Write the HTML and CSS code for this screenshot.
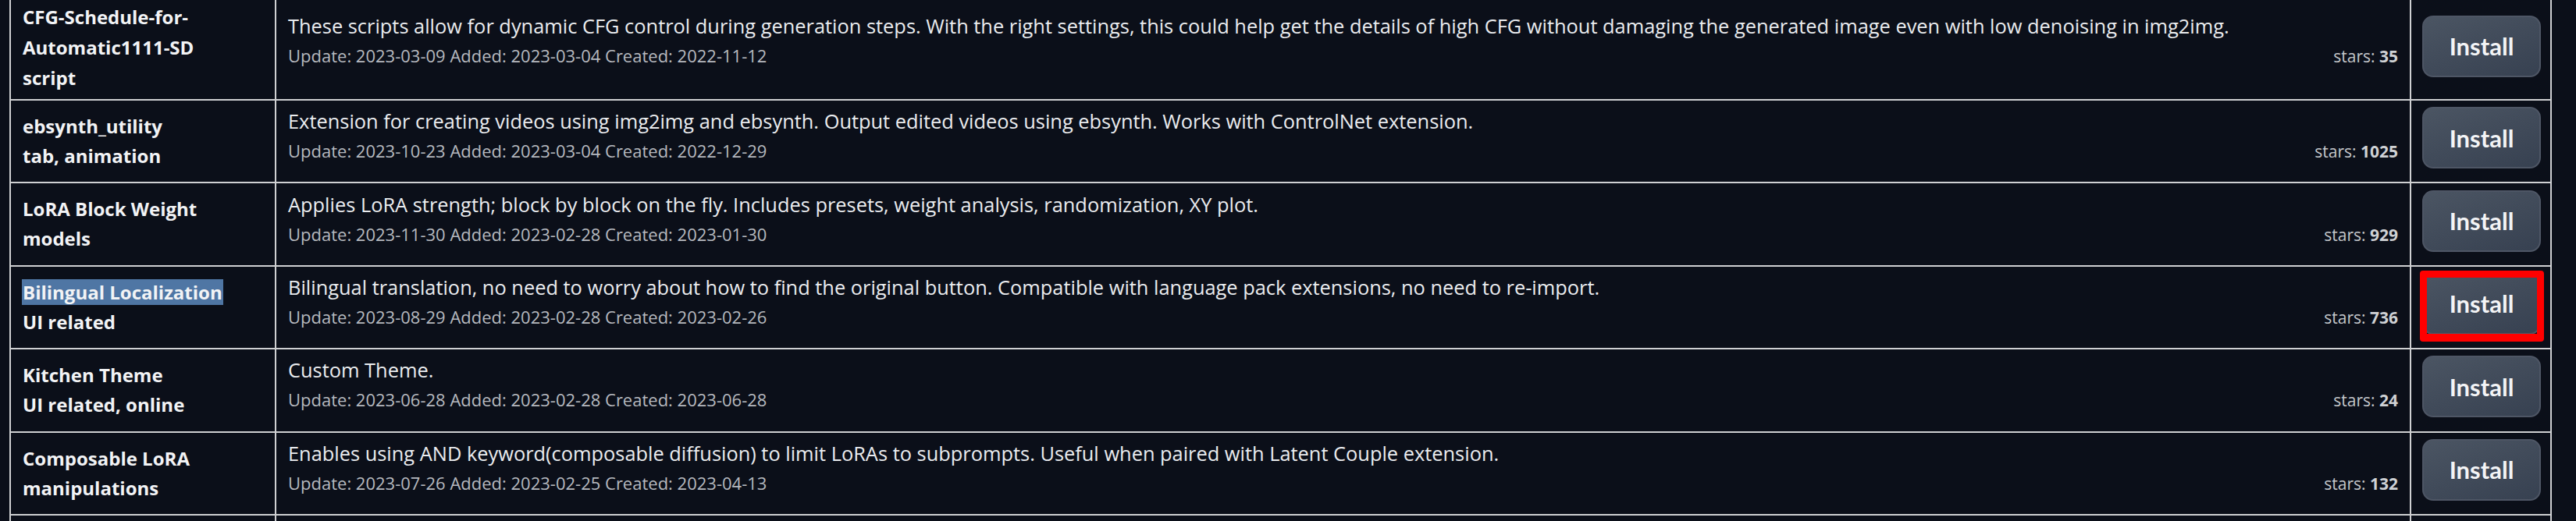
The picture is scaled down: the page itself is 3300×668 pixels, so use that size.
FILE: index.html
```html
<!DOCTYPE html>
<html lang="en">
<head>
<meta charset="utf-8">
<title>Available extensions</title>
<link rel="stylesheet" href="styles.css">
</head>
<body>
<div class="viewport">
  <div class="panel">
    <table class="ext-table">
      <tbody>
        <tr class="row-first">
          <td class="name-cell"><span class="ext-name">CFG-Schedule-for-<br>Automatic1111-SD</span><br><span class="ext-tags">script</span></td>
          <td class="desc-cell">
            <div class="desc">These scripts allow for dynamic CFG control during generation steps. With the right settings, this could help get the details of high CFG without damaging the generated image even with low denoising in img2img.</div>
            <div class="info"><span class="dates">Update: 2023-03-09 Added: 2023-03-04 Created: 2022-11-12</span><span class="stars">stars: <b>35</b></span></div>
          </td>
          <td class="btn-cell"><div class="btn-wrap"><button class="install">Install</button></div></td>
        </tr>
        <tr>
          <td class="name-cell"><span class="ext-name">ebsynth_utility</span><br><span class="ext-tags">tab, animation</span></td>
          <td class="desc-cell">
            <div class="desc">Extension for creating videos using img2img and ebsynth. Output edited videos using ebsynth. Works with ControlNet extension.</div>
            <div class="info"><span class="dates">Update: 2023-10-23 Added: 2023-03-04 Created: 2022-12-29</span><span class="stars">stars: <b>1025</b></span></div>
          </td>
          <td class="btn-cell"><div class="btn-wrap"><button class="install">Install</button></div></td>
        </tr>
        <tr>
          <td class="name-cell"><span class="ext-name">LoRA Block Weight</span><br><span class="ext-tags">models</span></td>
          <td class="desc-cell">
            <div class="desc">Applies LoRA strength; block by block on the fly. Includes presets, weight analysis, randomization, XY plot.</div>
            <div class="info"><span class="dates">Update: 2023-11-30 Added: 2023-02-28 Created: 2023-01-30</span><span class="stars">stars: <b>929</b></span></div>
          </td>
          <td class="btn-cell"><div class="btn-wrap"><button class="install">Install</button></div></td>
        </tr>
        <tr>
          <td class="name-cell"><span class="ext-name selected">Bilingual Localization</span><br><span class="ext-tags">UI related</span></td>
          <td class="desc-cell">
            <div class="desc">Bilingual translation, no need to worry about how to find the original button. Compatible with language pack extensions, no need to re-import.</div>
            <div class="info"><span class="dates">Update: 2023-08-29 Added: 2023-02-28 Created: 2023-02-26</span><span class="stars">stars: <b>736</b></span></div>
          </td>
          <td class="btn-cell"><div class="btn-wrap"><button class="install">Install</button><span class="highlight-box"></span></div></td>
        </tr>
        <tr>
          <td class="name-cell"><span class="ext-name">Kitchen Theme</span><br><span class="ext-tags">UI related, online</span></td>
          <td class="desc-cell">
            <div class="desc">Custom Theme.</div>
            <div class="info"><span class="dates">Update: 2023-06-28 Added: 2023-02-28 Created: 2023-06-28</span><span class="stars">stars: <b>24</b></span></div>
          </td>
          <td class="btn-cell"><div class="btn-wrap"><button class="install">Install</button></div></td>
        </tr>
        <tr>
          <td class="name-cell"><span class="ext-name">Composable LoRA</span><br><span class="ext-tags">manipulations</span></td>
          <td class="desc-cell">
            <div class="desc">Enables using AND keyword(composable diffusion) to limit LoRAs to subprompts. Useful when paired with Latent Couple extension.</div>
            <div class="info"><span class="dates">Update: 2023-07-26 Added: 2023-02-25 Created: 2023-04-13</span><span class="stars">stars: <b>132</b></span></div>
          </td>
          <td class="btn-cell"><div class="btn-wrap"><button class="install">Install</button></div></td>
        </tr>
        <tr class="row-cut">
          <td class="name-cell"></td>
          <td class="desc-cell"></td>
          <td class="btn-cell"></td>
        </tr>
      </tbody>
    </table>
  </div>
</div>
</body>
</html>
```
FILE: styles.css
```css
html, body {
  margin: 0;
  padding: 0;
  background: #0b0f19;
}

body {
  font-family: "Open Sans", "Liberation Sans", sans-serif;
  color: #e8e9eb;
}

.viewport {
  height: 668px;
  overflow: hidden;
}

.panel {
  padding: 0 31px 0 12px;
}

.ext-table {
  width: 100%;
  margin-top: -12px;
  border-collapse: collapse;
  table-layout: fixed;
}

.ext-table td {
  border: 2px solid #cfd0d2;
  padding: 14px 15px 14.4px 15px;
}

.name-cell {
  width: 308px;
  vertical-align: middle;
  font-weight: 700;
  font-size: 24px;
  line-height: 38px;
  color: #f2f3f5;
  padding-left: 16px;
}

.row-first .name-cell {
  line-height: 39px;
  padding-top: 12px;
  padding-bottom: 8px;
}

.ext-name.selected {
  background: #4f76a4;
  padding: 0 1px;
  margin-left: -1px;
}

.ext-table .desc-cell {
  vertical-align: middle;
  padding-top: 0;
  padding-bottom: 0;
}

.desc {
  font-size: 25.4px;
  line-height: 36px;
  color: #eaecef;
}

.info {
  display: flex;
  align-items: baseline;
  justify-content: space-between;
  margin-top: 6px;
  margin-bottom: 17px;
  line-height: 28px;
}

.dates {
  font-size: 22px;
  color: #b6b9bf;
}

.stars {
  font-size: 21px;
  color: #c4c6ca;
}

.stars b {
  font-weight: 700;
  color: #cfd1d4;
}

.ext-table .btn-cell {
  width: 150px;
  vertical-align: middle;
  padding: 8px 14px 17px 14px;
}

.ext-table .row-first .btn-cell {
  padding-top: 14px;
  padding-bottom: 13px;
}

.ext-table .row-cut td {
  height: 76px;
}

.btn-wrap {
  position: relative;
  width: 152px;
  height: 79px;
}

.install {
  display: block;
  width: 152px;
  height: 79px;
  border: 2px solid #4e5665;
  border-radius: 14px;
  background: linear-gradient(160deg, #4b5563 0%, #374151 100%);
  color: #f3f4f6;
  font-family: "Lato", "Liberation Sans", sans-serif;
  font-weight: 700;
  font-size: 31px;
  padding: 0;
}

.highlight-box {
  position: absolute;
  left: -3px;
  top: -3px;
  width: 141px;
  height: 72px;
  border: 9px solid #ff0000;
  border-bottom-width: 10px;
  border-radius: 4px;
}
```
